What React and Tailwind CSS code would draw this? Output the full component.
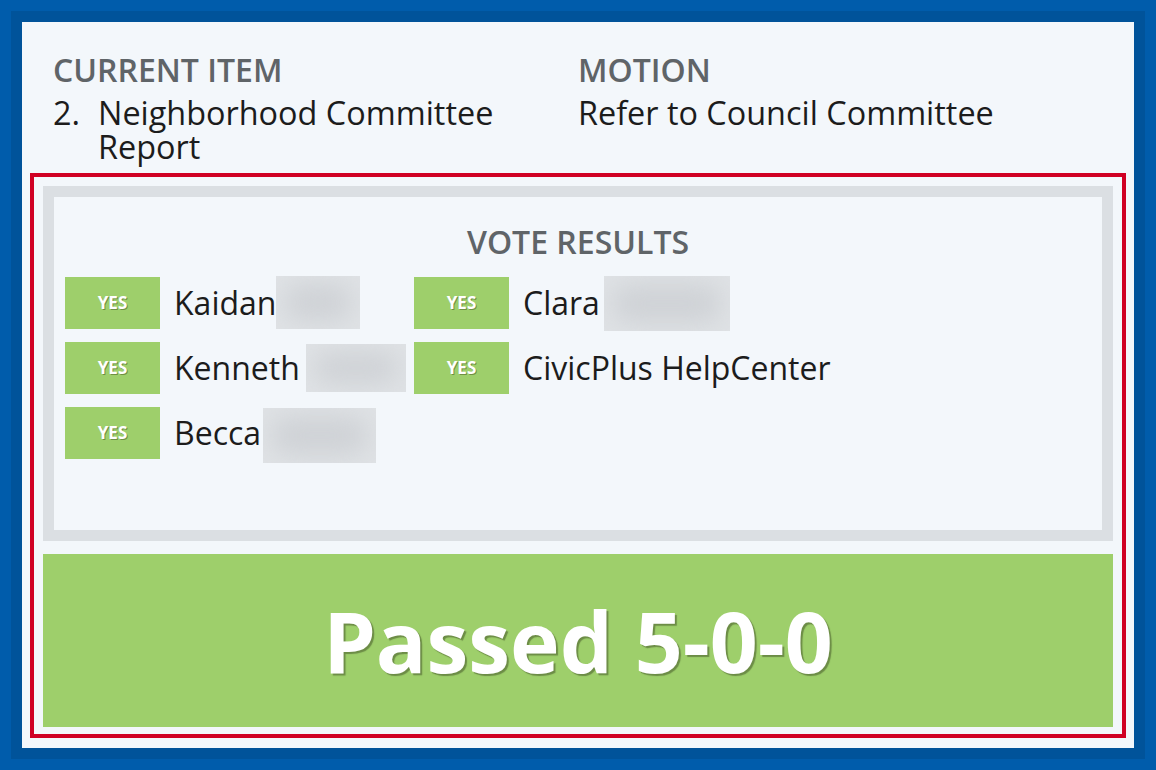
import React from 'react';

const votes = [
    { name: 'Kaidan', blur: 'w-[84px] h-[53px] -mt-[2px]' },
    { name: 'Clara', blur: 'w-[126px] h-[55px] mt-[0px]', gap: 'ml-[4px]' },
    { name: 'Kenneth', blur: 'w-[100px] h-[48px] mt-[0px]', gap: 'ml-[6px]' },
    { name: 'CivicPlus HelpCenter' },
    { name: 'Becca', blur: 'w-[113px] h-[55px] mt-[4px]', gap: 'ml-[2px]' },
];

const VoteRow = ({ name, blur, gap }) => (
    <div className="flex items-center h-[52px]">
        <div className="w-[95px] h-[52px] bg-[#9ecf6b] flex items-center justify-center text-white font-bold text-[17px] [text-shadow:1px_1px_0_#6f8f44]">
            YES
        </div>
        <span className="ml-[14px] text-[32px] text-[#1c1c1c] leading-none">{name}</span>
        {blur && (
            <div className={`${blur} ${gap || ''} relative overflow-hidden bg-[#dfe2e5]`}>
                <div className="absolute inset-[8px] rounded-full bg-[#cfd2d6] blur-md" />
            </div>
        )}
    </div>
);

export default function App() {
    return (
        <div
            className="w-[1156px] h-[770px] bg-[#005cab] p-[11px]"
            style={{ fontFamily: '"Open Sans", "Noto Sans", sans-serif' }}
        >
            <div className="w-full h-full bg-[#00539a] p-[11px]">
                <div className="w-full h-full bg-[#f3f7fb] flex flex-col">
                    <div className="grid grid-cols-2 px-[31px] pt-[28px] h-[151px]">
                        <div>
                            <div className="text-[32px] font-semibold text-[#5f6468] leading-[40px]">CURRENT ITEM</div>
                            <div className="flex text-[32.4px] text-[#1c1c1c] leading-[34px] mt-[5px]">
                                <span className="w-[45px] shrink-0">2.</span>
                                <span>Neighborhood Committee<br />Report</span>
                            </div>
                        </div>
                        <div>
                            <div className="text-[32px] font-semibold text-[#5f6468] leading-[40px]">MOTION</div>
                            <div className="text-[32.4px] text-[#1c1c1c] leading-[34px] mt-[5px]">Refer to Council Committee</div>
                        </div>
                    </div>
                    <div className="mx-[8px] h-[565px] border-[4px] border-[#d00024] px-[9px] pt-[9px] pb-[7px] flex flex-col">
                        <div className="h-[355px] border-[11px] border-[#dbdfe3] bg-[#f3f7fb] px-[11px]">
                            <div className="text-center text-[32px] font-semibold text-[#5f6468] mt-[25px] leading-[40px]">
                                VOTE RESULTS
                            </div>
                            <div className="grid grid-cols-[349px_1fr] gap-y-[13px] mt-[15px]">
                                {votes.map((v) => (
                                    <VoteRow key={v.name} {...v} />
                                ))}
                            </div>
                        </div>
                        <div className="mt-[13px] flex-1 bg-[#9ecf6b] flex items-center justify-center">
                            <span className="text-white font-bold text-[84px] leading-none [text-shadow:2px_2px_1px_#6c8c46]">
                                Passed 5-0-0
                            </span>
                        </div>
                    </div>
                </div>
            </div>
        </div>
    );
}
